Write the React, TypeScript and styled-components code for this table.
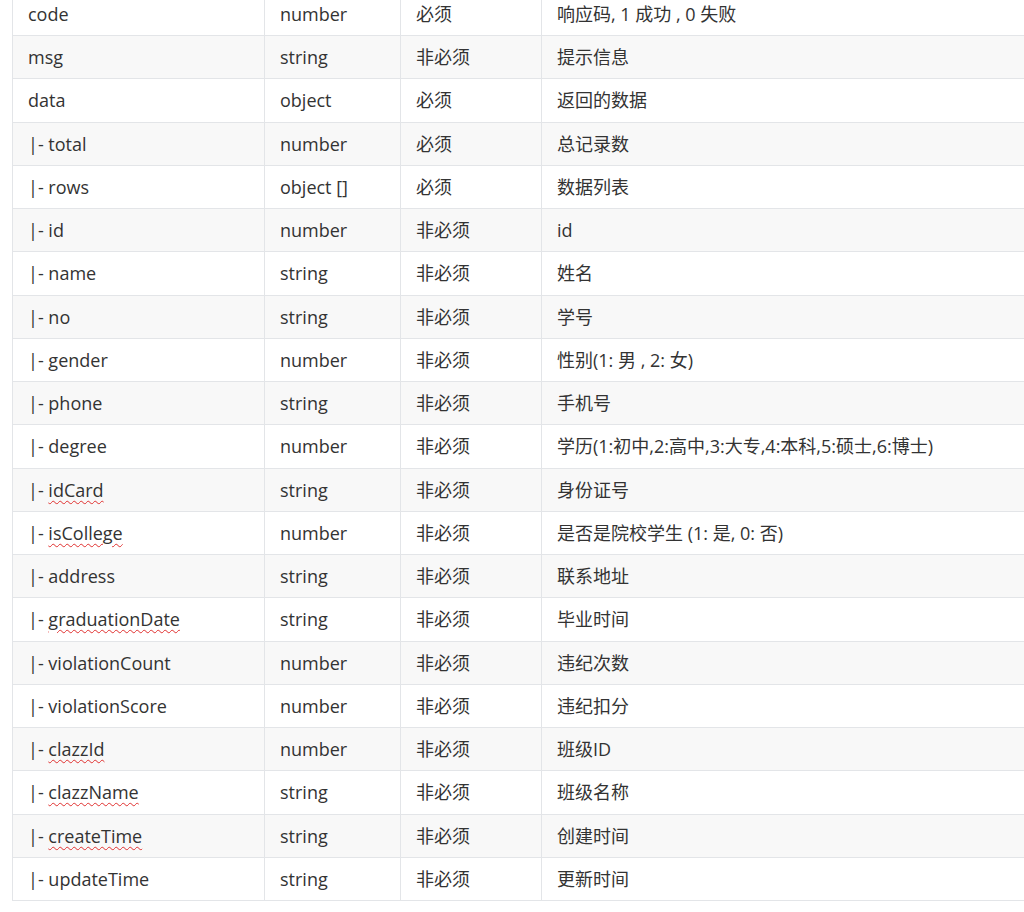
import React from "react";
import styled, { createGlobalStyle } from "styled-components";

const Global = createGlobalStyle`
  html, body {
    margin: 0;
    padding: 0;
    background: #ffffff;
    overflow: hidden;
  }
  body {
    font-family: "Open Sans", "Noto Sans CJK SC", sans-serif;
    font-size: 18px;
    color: #333333;
  }
`;

const Page = styled.div`
  padding-left: 12px;
  margin-top: -8.25px;
  width: 1012px;
`;

const Table = styled.table`
  border-collapse: collapse;
  table-layout: fixed;
  width: 1012px;
`;

const Row = styled.tr<{ $striped: boolean }>`
  background: ${(p) => (p.$striped ? "#f8f8f8" : "#ffffff")};
`;

const Cell = styled.td`
  border: 1px solid #e3e5e8;
  padding: 8px 15px;
  line-height: 26.25px;
  white-space: nowrap;
  overflow: hidden;
  vertical-align: middle;
  font-family: "Open Sans", "Noto Sans CJK SC", sans-serif;
  font-size: 18px;
  color: #333333;

  &:last-child {
    border-right: none;
  }
`;

const Misspelled = styled.span`
  text-decoration: underline wavy #e0302f;
  text-decoration-thickness: 1px;
  text-underline-offset: 3px;
`;

type Field = [string, string, string, string, boolean?];

const rows: Field[] = [
  ["code", "number", "必须", "响应码, 1 成功 , 0 失败"],
  ["msg", "string", "非必须", "提示信息"],
  ["data", "object", "必须", "返回的数据"],
  ["|- total", "number", "必须", "总记录数"],
  ["|- rows", "object []", "必须", "数据列表"],
  ["|- id", "number", "非必须", "id"],
  ["|- name", "string", "非必须", "姓名"],
  ["|- no", "string", "非必须", "学号"],
  ["|- gender", "number", "非必须", "性别(1: 男 , 2: 女)"],
  ["|- phone", "string", "非必须", "手机号"],
  ["|- degree", "number", "非必须", "学历(1:初中,2:高中,3:大专,4:本科,5:硕士,6:博士)"],
  ["|- idCard", "string", "非必须", "身份证号", true],
  ["|- isCollege", "number", "非必须", "是否是院校学生 (1: 是, 0: 否)", true],
  ["|- address", "string", "非必须", "联系地址"],
  ["|- graduationDate", "string", "非必须", "毕业时间", true],
  ["|- violationCount", "number", "非必须", "违纪次数"],
  ["|- violationScore", "number", "非必须", "违纪扣分"],
  ["|- clazzId", "number", "非必须", "班级ID", true],
  ["|- clazzName", "string", "非必须", "班级名称", true],
  ["|- createTime", "string", "非必须", "创建时间", true],
  ["|- updateTime", "string", "非必须", "更新时间"],
];

function FieldName({ name, typo }: { name: string; typo?: boolean }) {
  if (!typo) return <>{name}</>;
  const prefix = "|- ";
  return (
    <>
      {prefix}
      <Misspelled>{name.slice(prefix.length)}</Misspelled>
    </>
  );
}

export default function App() {
  return (
    <>
      <Global />
      <Page>
        <Table>
          <colgroup>
            <col style={{ width: 252 }} />
            <col style={{ width: 136 }} />
            <col style={{ width: 141 }} />
            <col />
          </colgroup>
          <tbody>
            {rows.map(([name, type, req, desc, typo], i) => (
              <Row key={name} $striped={i % 2 === 1}>
                <Cell>
                  <FieldName name={name} typo={typo} />
                </Cell>
                <Cell>{type}</Cell>
                <Cell>{req}</Cell>
                <Cell>{desc}</Cell>
              </Row>
            ))}
          </tbody>
        </Table>
      </Page>
    </>
  );
}
